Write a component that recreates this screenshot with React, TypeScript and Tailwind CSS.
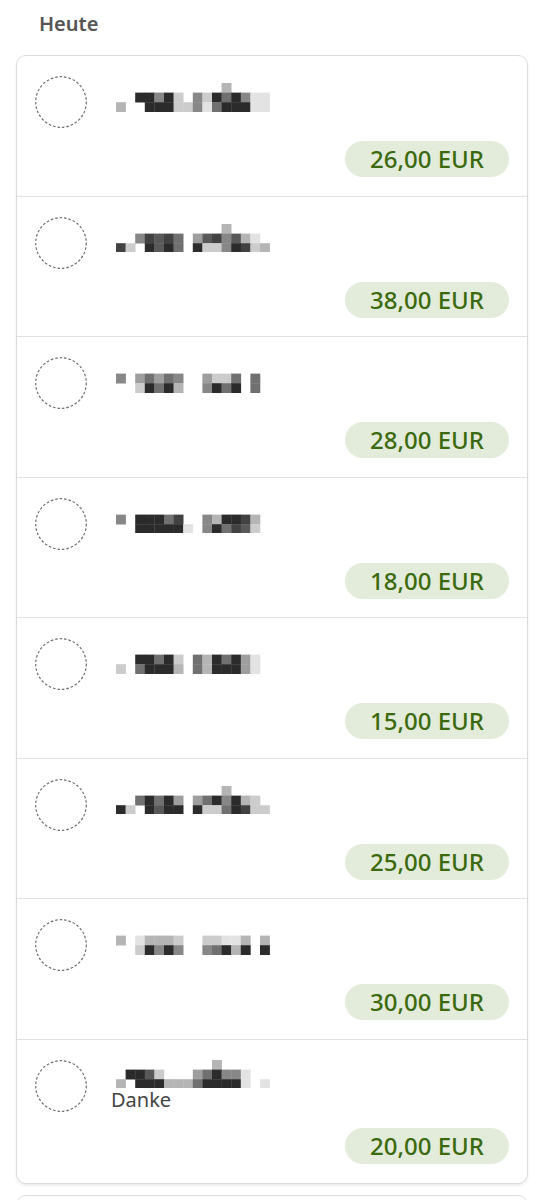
import React from 'react';

type Payment = {
  amount: string;
  note?: string;
  // pixelated (redacted) name, three rows of cells, '.' = empty, 1-9 = darkness
  mosaic: [string, string, string];
};

const PAYMENTS: Payment[] = [
  { amount: '26,00 EUR', mosaic: ['...........3....', '..99592.52969511', '3..9992251699911'] },
  { amount: '38,00 EUR', mosaic: ['...........3....', '..58786.4785731.', '82.9796.92259823'] },
  { amount: '28,00 EUR', mosaic: ['................', '5.46465..4226.6.', '..29693..5969.6.'] },
  { amount: '18,00 EUR', mosaic: ['................', '5.99968..539983.', '..999991.596872.'] },
  { amount: '15,00 EUR', mosaic: ['................', '..99692.6396941.', '2.69993.6399941.'] },
  { amount: '25,00 EUR', mosaic: ['...........3....', '..69694.4695932.', '92.9799.92269822'] },
  { amount: '30,00 EUR', mosaic: ['................', '3.13332..22113.3', '..29595..56939.9'] },
  { amount: '20,00 EUR', note: 'Danke', mosaic: ['..........3.....', '.9972...469551..', '3.999333699991.1'] },
];

const CELL = 9.6;

function Mosaic({ rows }: { rows: [string, string, string] }) {
  return (
    <svg width={CELL * 16} height={CELL * 3} className="block" style={{ filter: 'blur(0.5px)' }}>
      {rows.map((row, r) =>
        row.split('').map((ch, c) => {
          const level = parseInt(ch, 10);
          if (!level) return null;
          const v = Math.round(250 - level * 23);
          return (
            <rect
              key={`${r}-${c}`}
              x={c * CELL}
              y={r * CELL}
              width={CELL + 0.3}
              height={CELL + 0.3}
              fill={`rgb(${v},${v},${v})`}
            />
          );
        })
      )}
    </svg>
  );
}

function Avatar() {
  return (
    <svg width="52" height="52" viewBox="0 0 52 52" className="shrink-0">
      <circle cx="26" cy="26" r="25.3" fill="none" stroke="#707070" strokeWidth="1.2" strokeDasharray="2.6 1.9" />
    </svg>
  );
}

function PaymentRow({ p, last }: { p: Payment; last: boolean }) {
  return (
    <div className={`pl-[18px] pr-[18px] pt-[20px] pb-[18.5px] ${last ? '' : 'border-b border-[#e2e2e2]'}`}>
      <div className="flex items-center gap-[29px]">
        <Avatar />
        <div className="flex flex-col">
          <Mosaic rows={p.mosaic} />
          {p.note ? (
            <span className="-ml-[5px] text-[20px] leading-[24px] text-[#444]">{p.note}</span>
          ) : (
            <span className="h-[9px]" />
          )}
        </div>
      </div>
      <div className={`flex justify-end ${p.note ? 'mt-[16px]' : 'mt-[13px]'}`}>
        <span className="h-[36px] px-[25px] rounded-full bg-[#e3ecda] text-[#3b6a0e] text-[24px] leading-[36px] font-medium">
          {p.amount}
        </span>
      </div>
    </div>
  );
}

export default function App() {
  return (
    <div className="h-screen overflow-hidden bg-white" style={{ fontFamily: '"Noto Sans", "Open Sans", sans-serif' }}>
      <div className="px-[16px]">
        <h2 className="pl-[23px] pt-[10px] h-[55px] text-[20px] leading-[28px] font-semibold text-[#555]">Heute</h2>
        <div className="rounded-[10px] border border-[#dcdcdc] bg-white shadow-[0_2px_3px_rgba(0,0,0,0.08)]">
          {PAYMENTS.map((p, i) => (
            <PaymentRow key={i} p={p} last={i === PAYMENTS.length - 1} />
          ))}
        </div>
        <div className="mt-[11px] h-[120px] rounded-t-[10px] border border-[#dcdcdc] bg-white" />
      </div>
    </div>
  );
}
